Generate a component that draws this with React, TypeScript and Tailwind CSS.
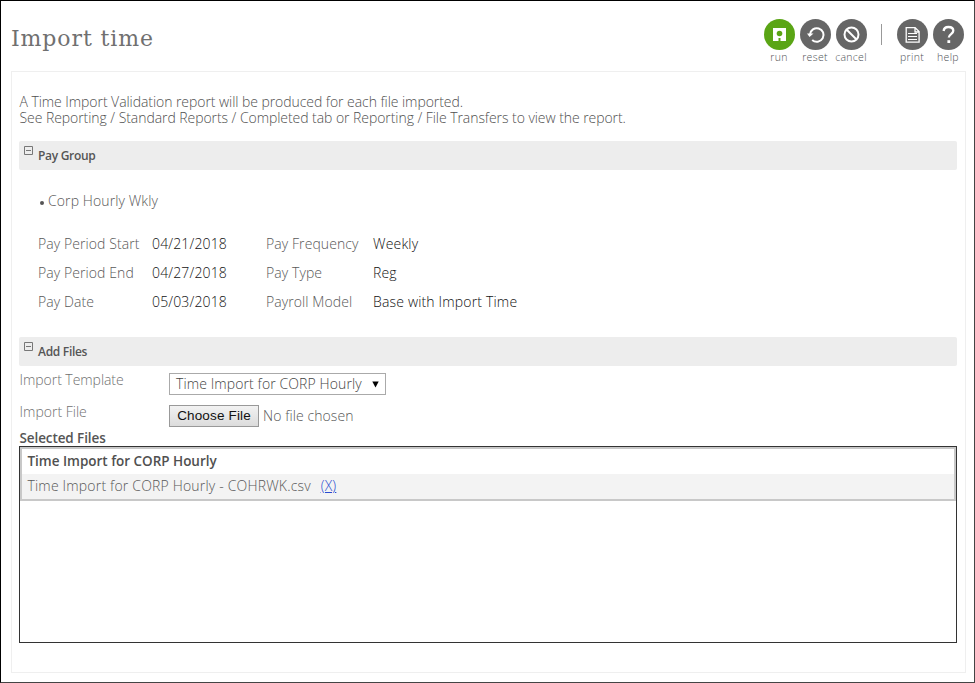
import type { ReactNode } from "react";

function Action({ label, color = "bg-[#666666]", children }: { label: string; color?: string; children: ReactNode }) {
  return (
    <button className="flex w-9 flex-col items-center">
      <span className={`flex size-[31px] items-center justify-center rounded-full ${color}`}>
        <svg width="31" height="31" viewBox="0 0 31 31" fill="none" stroke="#fff">{children}</svg>
      </span>
      <span className="mt-px text-[10.5px] leading-[13px] tracking-[0.3px] text-[#505356]">{label}</span>
    </button>
  );
}

function Section({ title }: { title: string }) {
  return (
    <div className="flex h-[29px] rounded-[2px] bg-[#ededed] pl-[5px]">
      <svg className="mt-[5px]" width="9" height="9" viewBox="0 0 9 9" fill="none" stroke="#777">
        <path d="M.5 .5h8v8h-8zM2 4.5h5" />
      </svg>
      <h2 className="ml-[5px] text-[12px] font-semibold leading-[29px] tracking-[-0.3px] text-[#555]">{title}</h2>
    </div>
  );
}

const rows = [
  ["Pay Period Start", "04/21/2018", "Pay Frequency", "Weekly"],
  ["Pay Period End", "04/27/2018", "Pay Type", "Reg"],
  ["Pay Date", "05/03/2018", "Payroll Model", "Base with Import Time"],
];

export default function App() {
  return (
    <div className="h-[683px] w-[975px] overflow-hidden border border-[#444] border-l-black border-t-black bg-white pl-[10px] pr-[8px] font-['Open_Sans','Noto_Sans',sans-serif] text-[14px] font-light leading-4 text-[#585858]">
      <header className="flex h-[70px] justify-between">
        <h1 className="mt-[22px] font-['DejaVu_Serif',serif] text-[22px] font-normal leading-8 tracking-[0.9px] text-[#707070]">Import time</h1>
        <div className="mt-[18px] flex items-start">
          <Action label="run" color="bg-[#5aa515]">
            <path d="M9 9h13v13H9z" fill="#fff" stroke="none" />
            <circle cx="15.5" cy="14.5" r="2.8" fill="#5aa515" stroke="none" />
            <path d="M14.5 19v3h2v-3z" fill="#5aa515" stroke="none" />
          </Action>
          <Action label="reset">
            <path d="M10 15.5a6.8 6.8 0 1 1 2.2 5.5" strokeWidth="2" />
            <path d="M7 14.5h6.5L9.5 18z" fill="#fff" stroke="none" />
          </Action>
          <Action label="cancel">
            <circle cx="15.5" cy="15.5" r="7" strokeWidth="2" />
            <path d="M10.5 10.5l10 10" strokeWidth="2" />
          </Action>
          <span className="ml-[12px] mr-[12px] mt-[5px] h-[21px] w-px bg-[#999]" />
          <Action label="print">
            <path d="M9.2 8.7h8.9l4 3.8v10.6H9.2zM18 9v4h4" strokeWidth="1.3" />
            <path d="M11 14.5h9M11 17.5h9M11 20.5h9" strokeWidth="1.2" />
          </Action>
          <Action label="help">
            <path d="M10.6 12c.3-2.7 2-4 4.8-4 3 0 4.9 1.5 4.9 3.8 0 3.3-4.5 3.3-4.5 6.8" strokeWidth="2.3" />
            <path d="M14.4 21.2h2.8v2.8h-2.8z" fill="#fff" stroke="none" />
          </Action>
        </div>
      </header>
      <main className="h-[602px] w-[955px] border border-[#efefef] pl-[7px] pr-[8px] pt-[22px]">
        <div className="pl-[0.5px] tracking-[-0.06px] text-[#505050]">
          <p>A Time Import Validation report will be produced for each file imported.</p>
          <p>See Reporting / Standard Reports / Completed tab or Reporting / File Transfers to view the report.</p>
        </div>
        <div className="mt-[15px]"><Section title="Pay Group" /></div>
        <div className="h-[167px] pl-[19px] pt-[23px]">
          <p className="flex items-center gap-[4px] pl-[2px] tracking-[0.1px]"><span className="mt-[3px] size-1 rounded-full bg-[#555]" />Corp Hourly Wkly</p>
          <div className="mt-[20px] grid grid-cols-[114px_114px_107px_200px] leading-[29px] tracking-[0.08px]">
            {rows.flatMap((r) => r.map((c, i) => (
              <span key={c} className={i === 3 ? "tracking-[0.17px] text-[#111]" : i === 1 ? "tracking-[0.15px] text-[#111]" : ""}>{c}</span>
            )))}
          </div>
        </div>
        <Section title="Add Files" />
        <div className="flex h-[38px] pt-[6px]">
          <span className="w-[150px] pl-[0.5px] tracking-[-0.05px] text-[#707070]">Import Template</span>
          <button className="mt-px flex h-[22px] w-[217px] items-center justify-between border border-[#aaa] bg-white pl-[6px] pr-[6px] tracking-[0.1px] text-[#444]">
            <span>Time Import for CORP Hourly</span>
            <svg width="7" height="7" viewBox="0 0 7 7"><path d="M.3 .5h6.4L3.5 6.5z" fill="#000" /></svg>
          </button>
        </div>
        <div className="flex h-[26px]">
          <span className="w-[150px] pl-[0.5px] text-[#707070]">Import File</span>
          <button className="mt-px h-[22px] w-[90px] border border-[#999] bg-linear-to-b from-[#f2f2f2] to-[#dcdcdc] font-['Liberation_Sans',sans-serif] text-[13.5px] font-normal leading-5 tracking-[0.15px] text-[#111]">Choose File</button>
          <span className="ml-[4px] mt-[4px] tracking-[0.08px]">No file chosen</span>
        </div>
        <h3 className="pl-[0.5px] text-[13.5px] font-semibold tracking-[-0.1px] text-[#555]">Selected Files</h3>
        <div className="h-[197px] border border-[#333]">
          <div className="border-2 border-[#c8c8c8]">
            <div className="h-[25px] pl-[5.5px] text-[13.5px] font-semibold leading-[25px] tracking-[-0.02px] text-[#505050]">Time Import for CORP Hourly</div>
            <div className="h-[25px] bg-[#f3f3f3] pl-[5.5px] leading-[23px] tracking-[0.18px]">Time Import for CORP Hourly - COHRWK.csv <a className="ml-[6px] text-[#2a4bd0] underline" href="#">(X)</a></div>
          </div>
        </div>
      </main>
    </div>
  );
}
